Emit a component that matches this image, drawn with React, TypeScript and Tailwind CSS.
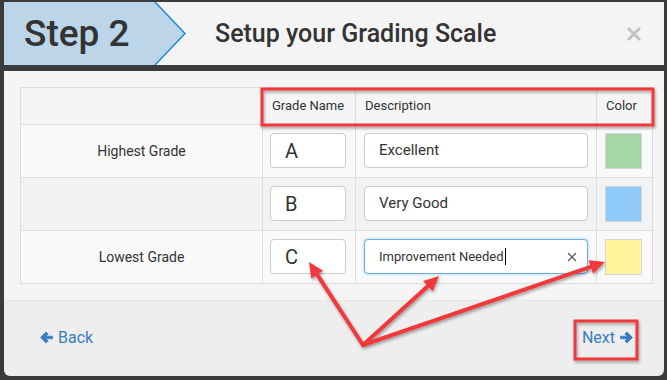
import React from "react";

type P = [number, number];

function Arrow({ from, to }: { from: P; to: P }) {
  const dx = to[0] - from[0];
  const dy = to[1] - from[1];
  const len = Math.sqrt(dx * dx + dy * dy);
  const ux = dx / len;
  const uy = dy / len;
  const hl = 15;
  const hw = 7;
  const bx = to[0] - ux * hl;
  const by = to[1] - uy * hl;
  const nx = -uy;
  const ny = ux;
  const pts = `${to[0]},${to[1]} ${bx + nx * hw},${by + ny * hw} ${bx - nx * hw},${by - ny * hw}`;
  return (
    <g>
      <line x1={from[0]} y1={from[1]} x2={bx + ux * 2} y2={by + uy * 2} stroke="#f0393c" strokeWidth={4} strokeLinecap="round" />
      <polygon points={pts} fill="#f0393c" />
    </g>
  );
}

function ThickArrow({ dir }: { dir: "left" | "right" }) {
  return (
    <svg width="13" height="13" viewBox="0 0 14 14" className={dir === "right" ? "block -scale-x-100" : "block"}>
      <polygon points="0.5,7 6.5,1 8.8,3.3 6.3,5.6 13.5,5.6 13.5,8.4 6.3,8.4 8.8,10.7 6.5,13" fill="#3a7cc0" strokeLinejoin="round" stroke="#3a7cc0" strokeWidth="0.8" />
    </svg>
  );
}

const rows = [
  { label: "Highest Grade", grade: "A", desc: "Excellent", color: "bg-[#a5d6a7]", bg: "bg-[#f9f9f9]" },
  { label: "", grade: "B", desc: "Very Good", color: "bg-[#90caf9]", bg: "bg-[#f2f2f2]" },
  { label: "Lowest Grade", grade: "C", desc: "Improvement Needed", color: "bg-[#fff59d]", bg: "bg-[#f9f9f9]", focus: true },
];

export default function App() {
  return (
    <div
      className="relative w-[667px] h-[380px] overflow-hidden bg-[#3b3b3b] text-[#333]"
      style={{ fontFamily: "Roboto, 'Noto Sans', sans-serif" }}
    >
      <div className="ml-[4px] pt-[2px] w-[660px] flex flex-col">
        {/* header */}
        <div className="h-[63px] bg-[#f4f4f4] flex items-center">
          <div className="h-full flex">
            <div className="h-full w-[148px] bg-[#bdd5e9] flex items-center pl-[20px]">
              <span className="text-[37px] font-medium leading-none text-[#333]">Step 2</span>
            </div>
            <svg width="34" height="63" viewBox="0 0 34 63" className="block">
              <polygon points="0,0 3,0 33,31.5 3,63 0,63" fill="#bdd5e9" />
              <polyline points="3,0 33,31.5 3,63" fill="none" stroke="#1d8ad6" strokeWidth="1.5" />
            </svg>
          </div>
          <div className="ml-[29px] text-[25px] font-medium text-[#333] leading-none">Setup your Grading Scale</div>
          <svg width="16" height="16" viewBox="0 0 16 16" className="block ml-auto mr-[22px] mt-[1px]">
            <line x1="2" y1="2" x2="14" y2="14" stroke="#c4c4c4" strokeWidth="3" />
            <line x1="14" y1="2" x2="2" y2="14" stroke="#c4c4c4" strokeWidth="3" />
          </svg>
        </div>
        <div className="h-[6px]" />
        {/* body */}
        <div className="h-[229px] bg-[#f5f5f5] pt-[16px] pl-[16px]">
          <div className="w-[632px] border-l border-t border-[#dddddd] text-[13px]">
            <div className="grid grid-cols-[242px_93px_241px_56px] h-[37px] bg-[#f5f5f5]">
              <div className="border-r border-b border-[#dddddd]" />
              <div className="border-r border-b border-[#dddddd] flex items-center pl-[9px]">Grade Name</div>
              <div className="border-r border-b border-[#dddddd] flex items-center pl-[9px]">Description</div>
              <div className="border-r border-b border-[#dddddd] flex items-center pl-[9px]">Color</div>
            </div>
            {rows.map((r) => (
              <div key={r.grade} className={`grid grid-cols-[242px_93px_241px_56px] h-[53px] ${r.bg}`}>
                <div className="border-r border-b border-[#dddddd] flex items-center justify-center text-[14px] text-[#333]">
                  {r.label}
                </div>
                <div className="border-r border-b border-[#dddddd] pl-[7px] pt-[8px]">
                  <div className="w-[76px] h-[35px] bg-white border border-[#cccccc] rounded-[4px] flex items-center pl-[14px] text-[20px] text-[#333]">
                    {r.grade}
                  </div>
                </div>
                <div className="border-r border-b border-[#dddddd] pl-[8px] pt-[8px]">
                  {r.focus ? (
                    <div className="w-[224px] h-[35px] bg-white border border-[#66afe9] rounded-[4px] flex items-center pl-[14px] pr-[8px] text-[13px] text-[#333] shadow-[0_0_3px_rgba(102,175,233,0.6)]">
                      <span>Improvement Needed</span>
                      <span className="w-px h-[17px] bg-black ml-[1px]" />
                      <svg width="10" height="10" viewBox="0 0 10 10" className="block ml-auto mr-[2px]">
                        <line x1="1" y1="1" x2="9" y2="9" stroke="#555" strokeWidth="1.2" />
                        <line x1="9" y1="1" x2="1" y2="9" stroke="#555" strokeWidth="1.2" />
                      </svg>
                    </div>
                  ) : (
                    <div className="w-[224px] h-[35px] bg-white border border-[#cccccc] rounded-[4px] flex items-center pl-[14px] text-[15px] text-[#333]">
                      {r.desc}
                    </div>
                  )}
                </div>
                <div className="border-r border-b border-[#dddddd] pl-[8px] pt-[8px]">
                  <div className={`w-[37px] h-[36px] border border-[#d6d6d6] ${r.color}`} />
                </div>
              </div>
            ))}
          </div>
        </div>
        {/* footer */}
        <div className="h-[76px] bg-[#eeeeee] border-t border-[#e6e6e6] rounded-b-[6px] flex items-center justify-between pl-[36px] pr-[31px] pb-[2px] text-[16px] text-[#3a7cc0]">
          <div className="flex items-center gap-[5px]">
            <ThickArrow dir="left" />
            <span>Back</span>
          </div>
          <div className="flex items-center gap-[5px]">
            <span>Next</span>
            <ThickArrow dir="right" />
          </div>
        </div>
      </div>

      {/* annotations */}
      <svg className="absolute inset-0 pointer-events-none" width="667" height="380" viewBox="0 0 667 380">
        <defs>
          <filter id="sh" x="-10%" y="-10%" width="130%" height="140%">
            <feDropShadow dx="1" dy="2" stdDeviation="1.5" floodColor="#000" floodOpacity="0.35" />
          </filter>
        </defs>
        <g filter="url(#sh)">
          <rect x="262" y="89" width="391" height="36" fill="none" stroke="#f0393c" strokeWidth="3" />
          <rect x="575" y="321" width="62" height="38" fill="none" stroke="#f0393c" strokeWidth="3" />
          <Arrow from={[363, 345]} to={[309, 262]} />
          <Arrow from={[363, 345]} to={[439, 276]} />
          <Arrow from={[363, 345]} to={[605, 262]} />
        </g>
      </svg>
    </div>
  );
}
